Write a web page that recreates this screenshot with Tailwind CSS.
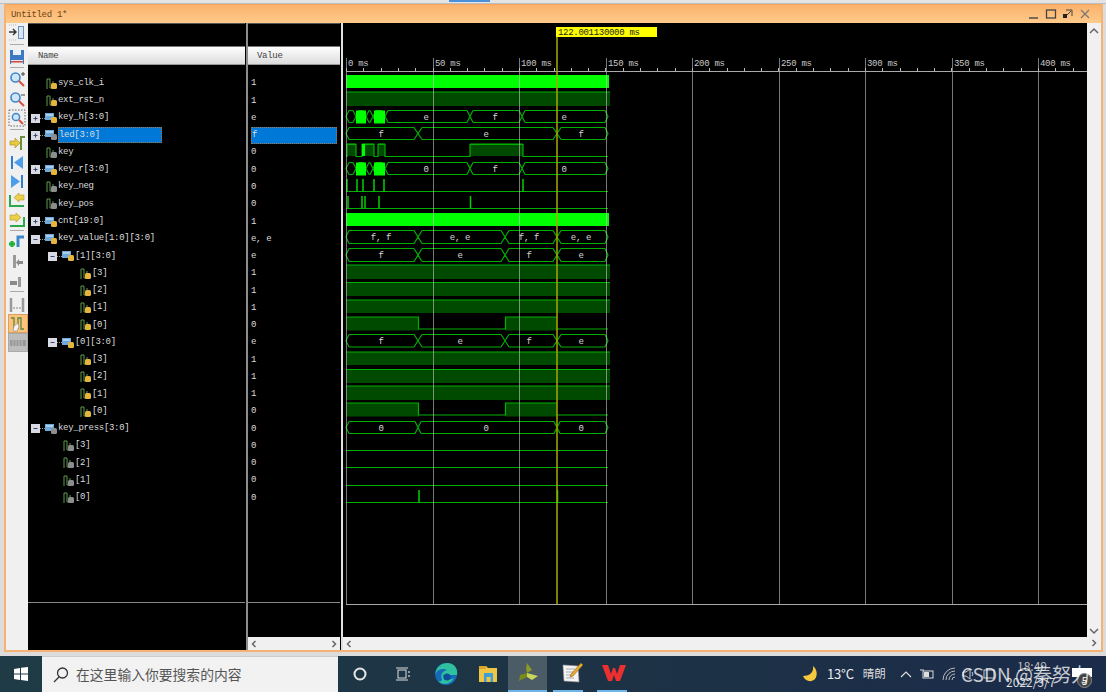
<!DOCTYPE html>
<html lang="en">
<head>
  <meta charset="UTF-8" />
  <title>Untitled 1*</title>
  <script src="https://cdn.jsdelivr.net/npm/@tailwindcss/browser@4"></script>
</head>
<body class="w-[1106px] h-[692px] overflow-hidden bg-[#dcdcdc] flex flex-col font-['Liberation_Mono',monospace]">

  <!-- top strip -->
  <div class="h-[4px] shrink-0 bg-[#e4e4e4] border-b border-[#bdbdbd]">
    <div class="ml-[449px] w-[41px] h-[2px] bg-[#4a90d9]"></div>
  </div>

  <!-- simulator window -->
  <div class="ml-[4px] w-[1099px] h-[648px] shrink-0 flex flex-col border-x-2 border-b-2 border-[#f6b273] bg-[#f0f0f0]">
    <div class="h-[19px] shrink-0 flex items-center justify-between pl-[5px] pr-[10px] bg-gradient-to-b from-[#fab26c] to-[#ffca8a] border-t border-[#f4a860]">
      <span class="pt-[4px] text-[9px] tracking-[-0.3px] text-[#6a4416]">Untitled 1*</span>
      <div class="flex items-center gap-[5px]">
        <svg width="12" height="12" viewBox="0 0 12 12"><path d="M1 10h9" stroke="#444" stroke-width="1.4"/></svg>
        <svg width="12" height="12" viewBox="0 0 12 12"><rect x="1.5" y="2" width="9" height="8" fill="none" stroke="#444" stroke-width="1.3"/></svg>
        <svg width="12" height="12" viewBox="0 0 12 12"><rect x="1" y="6" width="4" height="4" fill="#222"/><path d="M4 2h6v6M5 7l4-4" fill="none" stroke="#444"/></svg>
        <svg width="12" height="12" viewBox="0 0 12 12"><path d="M2 2l8 8M10 2l-8 8" stroke="#777" stroke-width="1.2"/></svg>
      </div>
    </div>

    <div class="flex-1 flex min-h-0">
      <!-- left toolbar -->
      <div class="w-[22px] shrink-0 flex flex-col items-center bg-[#f0f0f0]">
        <button class="h-[20px] w-full flex items-center justify-center"><svg width="18" height="18" viewBox="0 0 18 18"><path d="M1 8h7M5 5l3 3-3 3" fill="none" stroke="#333" stroke-width="1.4"/><rect x="10.5" y="2.5" width="5" height="12" fill="#d8e6f3" stroke="#6b93ba"/><path d="M1 1h8M1 16h8" stroke="#bbb" stroke-dasharray="1 1"/></svg></button>
        <div class="w-[14px] h-px bg-[#aaa] my-[1px]"></div>
        <button class="h-[20px] mt-[1px] w-full flex items-center justify-center"><svg width="18" height="18" viewBox="0 0 18 18"><rect x="2" y="2" width="14" height="14" fill="#3d78c2"/><rect x="5" y="2" width="8" height="5" fill="#e9f0f7"/><rect x="3" y="12" width="12" height="4" fill="#e8e8e8"/><rect x="3" y="13" width="12" height="1.5" fill="#d4483d"/></svg></button>
        <div class="w-[14px] h-px bg-[#aaa]"></div>
        <button class="h-[20px] mt-px w-full flex items-center justify-center"><svg width="18" height="18" viewBox="0 0 18 18"><circle cx="7.5" cy="7.5" r="4.5" fill="#cfe6f8" stroke="#3f87c9" stroke-width="1.6"/><path d="M11 11l5 5" stroke="#d9503c" stroke-width="2"/><path d="M13 4h4M15 2v4" stroke="#444"/></svg></button>
        <button class="h-[19px] w-full flex items-center justify-center"><svg width="18" height="18" viewBox="0 0 18 18"><circle cx="7.5" cy="7.5" r="4.5" fill="#cfe6f8" stroke="#3f87c9" stroke-width="1.6"/><path d="M11 11l5 5" stroke="#d9503c" stroke-width="2"/><path d="M13 5h4" stroke="#444"/></svg></button>
        <button class="h-[20px] w-full flex items-center justify-center"><svg width="18" height="18" viewBox="0 0 18 18"><rect x="1" y="1" width="16" height="16" fill="none" stroke="#666" stroke-dasharray="1.5 1.5"/><circle cx="8" cy="8" r="3.6" fill="#cfe6f8" stroke="#3f87c9" stroke-width="1.5"/><path d="M11 11l4 4" stroke="#d9503c" stroke-width="2"/></svg></button>
        <div class="w-[14px] h-px bg-[#aaa] my-[1px]"></div>
        <button class="h-[20px] mt-[2px] w-full flex items-center justify-center"><svg width="18" height="18" viewBox="0 0 18 18"><path d="M13 16V3h4" fill="none" stroke="#6d8f3c" stroke-width="2"/><path d="M2 7h5V4l5 5-5 5v-3H2z" fill="#e8c93c" stroke="#a58a20" stroke-width=".6"/></svg></button>
        <button class="h-[19px] w-full flex items-center justify-center"><svg width="18" height="18" viewBox="0 0 18 18"><rect x="3" y="2" width="2" height="13" fill="#2f7fd0"/><path d="M15 2v13L6 8.500z" fill="#4d9de8"/></svg></button>
        <button class="h-[19px] w-full flex items-center justify-center"><svg width="18" height="18" viewBox="0 0 18 18"><rect x="13" y="2" width="2" height="13" fill="#2f7fd0"/><path d="M3 2v13l9-6.500z" fill="#4d9de8"/></svg></button>
        <button class="h-[20px] w-full flex items-center justify-center"><svg width="18" height="18" viewBox="0 0 18 18"><path d="M2 3v11h14" fill="none" stroke="#2ea84a" stroke-width="2"/><path d="M16 3v5h-5v2L6 5.500 11 1v2z" fill="#ecd047" stroke="#a58a20" stroke-width=".5"/></svg></button>
        <button class="h-[19px] w-full flex items-center justify-center"><svg width="18" height="18" viewBox="0 0 18 18"><path d="M16 5v9H2" fill="none" stroke="#2ea84a" stroke-width="2"/><path d="M2 3h6V1l5 4.500L8 10V8H2z" fill="#ecd047" stroke="#a58a20" stroke-width=".5"/></svg></button>
        <div class="w-[14px] h-px bg-[#aaa]"></div>
        <button class="h-[19px] mt-px w-full flex items-center justify-center"><svg width="18" height="18" viewBox="0 0 18 18"><path d="M1 11h6M4 8v6" stroke="#22b33a" stroke-width="3"/><path d="M10 14V4h6" fill="none" stroke="#3f87c9" stroke-width="3"/></svg></button>
        <button class="h-[20px] w-full flex items-center justify-center"><svg width="18" height="18" viewBox="0 0 18 18"><path d="M5 16V3h3v13z" fill="#9a9a9a"/><path d="M15 9v3h-4v2l-3-3.500L11 7v2z" fill="#8a8a8a"/></svg></button>
        <button class="h-[19px] w-full flex items-center justify-center"><svg width="18" height="18" viewBox="0 0 18 18"><path d="M10 15V5h3v10z" fill="#9a9a9a"/><path d="M2 9h7v4H2z" fill="#8a8a8a"/></svg></button>
        <div class="w-[14px] h-px bg-[#aaa] mt-px"></div>
        <button class="h-[19px] mt-[3px] w-full flex items-center justify-center"><svg width="18" height="18" viewBox="0 0 18 18"><path d="M3 2v14M15 2v14" stroke="#999" stroke-width="2.500"/><path d="M5 12h8" stroke="#888" stroke-dasharray="2 1"/></svg></button>
        <button class="h-[19px] w-[20px] ml-px flex items-center justify-center bg-[#ffc27d] border border-[#d9a060]"><svg width="18" height="18" viewBox="0 0 18 18"><path d="M2 3h3v11M9 14V3h3v11h3" fill="none" stroke="#5c8a3c" stroke-width="1.300"/><path d="M4 16l1-5 4-3 1 4-2 4z" fill="#f4f4f4" stroke="#888" stroke-width=".6"/></svg></button>
        <button class="h-[19px] w-[20px] ml-px flex items-center justify-center bg-[#bdbdbd] border border-[#aaa]"><svg width="16" height="10" viewBox="0 0 16 10"><rect y="2" width="16" height="6" fill="#999"/><path d="M3 2v6M6 2v6M9 2v6M12 2v6" stroke="#bbb"/></svg></button>
      </div>

      <!-- name column -->
      <div class="w-[217px] shrink-0 flex flex-col bg-black">
        <div class="h-[23px] shrink-0 border-t border-[#555]"></div>
        <div class="h-[19px] shrink-0 flex items-center pl-[10px] bg-gradient-to-b from-white to-[#dcdcdc] border-t border-[#777] border-b border-b-[#999]">
          <span class="pt-[3px] text-[9px] tracking-[-0.3px] text-[#444]">Name</span>
        </div>
        <div id="names" class="h-[538px] shrink-0 pt-[10px] border-b border-[#888] text-[9px] tracking-[-0.3px] text-[#dcdcdc]"></div>
      </div>
      <div class="w-[3px] shrink-0 bg-[#8c8c8c] border-l border-black"></div>

      <!-- value column -->
      <div class="w-[92px] shrink-0 flex flex-col bg-black">
        <div class="h-[23px] shrink-0 border-t border-[#555]"></div>
        <div class="h-[19px] shrink-0 flex items-center pl-[9px] bg-gradient-to-b from-white to-[#dcdcdc] border-t border-[#777] border-b border-b-[#999]">
          <span class="pt-[3px] text-[9px] tracking-[-0.3px] text-[#444]">Value</span>
        </div>
        <div id="values" class="h-[538px] shrink-0 pt-[10.500px] border-b border-[#888] text-[9px] tracking-[-0.3px] text-[#dcdcdc]"></div>
        <div class="flex-1"></div>
        <div class="h-[13px] shrink-0 flex items-center justify-between px-[2px] bg-[#f0f0f0]">
          <svg width="8" height="8" viewBox="0 0 8 8"><path d="M5.500 1L2.500 4l3 3" fill="none" stroke="#666" stroke-width="1.500"/></svg>
          <svg width="8" height="8" viewBox="0 0 8 8"><path d="M2.500 1l3 3-3 3" fill="none" stroke="#666" stroke-width="1.500"/></svg>
        </div>
      </div>
      <div class="w-[3px] shrink-0 bg-black border-r-2 border-[#e0e0e0]"></div>

      <!-- waveform -->
      <div class="w-[744px] shrink-0 flex flex-col bg-black">
        <svg id="wave" width="744" height="614" viewBox="343 23 744 614" class="block shrink-0 text-[9px] tracking-[-0.3px]"></svg>
        <div class="h-[13px] shrink-0 flex items-center px-[2px] bg-[#f0f0f0]">
          <svg width="8" height="8" viewBox="0 0 8 8"><path d="M5.500 1L2.500 4l3 3" fill="none" stroke="#666" stroke-width="1.500"/></svg>
        </div>
      </div>

      <!-- vertical scrollbar -->
      <div class="w-[14px] shrink-0 flex flex-col items-center justify-between py-[3px] bg-[#f0f0f0]">
        <svg class="mt-[1px]" width="10" height="8" viewBox="0 0 10 8"><path d="M1 6l4-4 4 4" fill="none" stroke="#666" stroke-width="1.500"/></svg>
        <div class="flex flex-col items-center gap-[4px]">
          <svg width="10" height="8" viewBox="0 0 10 8"><path d="M1 2l4 4 4-4" fill="none" stroke="#666" stroke-width="1.500"/></svg>
          <svg width="8" height="8" viewBox="0 0 8 8"><path d="M2.500 1l3 3-3 3" fill="none" stroke="#666" stroke-width="1.500"/></svg>
        </div>
      </div>
    </div>
  </div>

  <!-- windows taskbar -->
  <div class="relative mt-[4px] h-[36px] shrink-0 flex items-center bg-gradient-to-r from-[#1e3b46] via-[#1d3344] to-[#1b2b4a] font-['Noto_Sans_CJK_SC',sans-serif] text-white">
    <div class="w-[42px] flex justify-center">
      <svg width="14" height="14" viewBox="0 0 14 14" fill="#fff"><path d="M0 2l6-1v5.500H0zM7 .8L14 0v6.500H7zM0 7.500h6V13l-6-1zM7 7.500h7V14l-7-1z"/></svg>
    </div>
    <div class="w-[296px] h-full flex items-center bg-[#f2f2f2] border-t border-[#ccc]">
      <svg class="ml-[10px]" width="18" height="18" viewBox="0 0 18 18"><circle cx="10.500" cy="7" r="5" fill="none" stroke="#333" stroke-width="1.300"/><path d="M7 11l-5 5" stroke="#333" stroke-width="1.300"/></svg>
      <span class="ml-[6px] text-[13.800px] text-[#555]">在这里输入你要搜索的内容</span>
    </div>
    <div class="w-[44px] flex justify-center">
      <svg width="16" height="16" viewBox="0 0 16 16"><circle cx="8" cy="8" r="5.500" fill="none" stroke="#e8e8e8" stroke-width="2"/></svg>
    </div>
    <div class="w-[41px] flex justify-center">
      <svg width="16" height="16" viewBox="0 0 16 16" fill="none" stroke="#ddd"><rect x="3" y="4" width="8" height="8"/><path d="M1 2h12M1 14h12M14 5v2M14 9v2" stroke-width="1.200"/></svg>
    </div>
    <div class="w-[42px] ml-[2px] flex justify-center">
      <svg width="24" height="24" viewBox="0 0 24 24"><circle cx="12" cy="12" r="11" fill="#1668b8"/><path d="M1.500 11C3 3 11 -1 18 2c4 2 6 6 5 11H9c0 4 6 6 11 3-3 6-11 8-16 3 2 1 4 0 4-2-2-3 0-8 5-9-4-2-9-1-11 3z" fill="#2fc0a0"/><circle cx="13" cy="15" r="3.500" fill="#0c4f96"/></svg>
    </div>
    <div class="w-[41px] flex justify-center">
      <svg width="20" height="18" viewBox="0 0 20 18"><path d="M1 1h7l2 2h9v14H1z" fill="#f1c544"/><rect x="1" y="1" width="7" height="3" fill="#d9a428"/><rect x="6" y="8" width="9" height="9" fill="#3e9fd8"/><rect x="8.500" y="12" width="4" height="5" fill="#f1c544"/></svg>
    </div>
    <div class="w-[39px] h-full flex justify-center items-center bg-[#4b5c66] border-b-2 border-[#6eb4e8]">
      <svg width="22" height="22" viewBox="0 0 22 22"><path d="M10 1l5 7-5 3-1-4z" fill="#8a9a24"/><path d="M10 11l11 3-6 4-5-3z" fill="#c9d65c"/><path d="M10 11l-7 2-1 6 8-4z" fill="#7a8a1c"/></svg>
    </div>
    <div class="w-[30px] h-full ml-[6px] flex justify-center items-center border-b-2 border-[#6eb4e8]">
      <svg class="ml-[8px] shrink-0" width="24" height="24" viewBox="0 0 24 24"><path d="M3 4l15 1 1 16-15-1z" fill="#f4f4f4" stroke="#999" stroke-width=".6"/><path d="M6 8h9M6 11h9M6 14h7M6 17h8" stroke="#aaa"/><path d="M21 2l2 2-10 11-3 1 1-3z" fill="#e9a82f" stroke="#7a5a10" stroke-width=".5"/></svg>
    </div>
    <div class="w-[30px] h-full ml-[14px] flex justify-center items-center border-b-2 border-[#6eb4e8]">
      <svg class="ml-[4px] shrink-0" width="26" height="20" viewBox="0 0 26 20"><path d="M1 2h6l3 9 2-6h2l2 6 3-9h6l-6 16h-4l-2-6-2 6H7z" fill="#ec2f2f"/></svg>
    </div>

    <!-- system tray -->
    <svg class="ml-[174px]" width="18" height="18" viewBox="0 0 18 18"><path d="M12 1c1 6-3 10-10 10 2 5 8 7 12 3 3-4 2-10-2-13z" fill="#f6c83b"/></svg>
    <span class="ml-[8px] text-[13px] tracking-[-0.2px] text-[#eee]">13°C</span>
    <span class="ml-[9px] text-[11.500px] text-[#ddd]">晴朗</span>
    <svg class="ml-[14px]" width="12" height="8" viewBox="0 0 12 8"><path d="M1 7l5-5 5 5" fill="none" stroke="#ddd" stroke-width="1.200"/></svg>
    <svg class="ml-[8px]" width="14" height="10" viewBox="0 0 14 10"><rect x="3" y="2" width="10" height="7" fill="none" stroke="#ddd"/><rect x="4" y="3" width="5" height="5" fill="#ddd"/><path d="M0 1h4" stroke="#ddd"/></svg>
    <svg class="ml-[8px]" width="14" height="14" viewBox="0 0 14 14" fill="none" stroke="#bbb"><path d="M1 13a12 12 0 0 1 12-12M4 13a9 9 0 0 1 9-9M7 13a6 6 0 0 1 6-6M10 13a3 3 0 0 1 3-3"/></svg>
    <svg class="ml-[6px]" width="14" height="14" viewBox="0 0 14 14" fill="none" stroke="#ccc"><path d="M1 5h3l4-3v10l-4-3H1zM10 5a3 3 0 0 1 0 4"/></svg>
    <svg class="ml-[6px]" width="14" height="14" viewBox="0 0 14 14" fill="none" stroke="#ccc"><rect x="2" y="3" width="10" height="8"/></svg>
    <span class="absolute left-[1017px] top-[1px] text-[12px] text-[#bbb]">18:49</span>
    <span class="absolute left-[1006px] top-[18px] text-[12px] leading-[16px] text-[#ddd]">2022/3/7</span>
    <span class="absolute left-[1072px] top-[12px] w-[20px] h-[9px] bg-white"></span>
    <span class="absolute left-[1077px] top-[17px] w-[15px] h-[15px] rounded-full bg-[#444] border border-[#888] flex items-center justify-center text-[10px] leading-none">5</span>
    <span class="absolute left-[961px] top-[5px] text-[19px] leading-[26px] text-white/75 whitespace-nowrap">CSDN @秦努力</span>
  </div>

  <script>
    const rows = [
      { name: "sys_clk_i", value: "1", pad: 3, icon: "bit", on: true },
      { name: "ext_rst_n", value: "1", pad: 3, icon: "bit", on: true },
      { name: "key_h[3:0]", value: "e", pad: 3, icon: "bus", on: true, box: "+" },
      { name: "led[3:0]", value: "f", pad: 3, icon: "bus", box: "+", selected: true },
      { name: "key", value: "0", pad: 3, icon: "bit" },
      { name: "key_r[3:0]", value: "0", pad: 3, icon: "bus", on: true, box: "+" },
      { name: "key_neg", value: "0", pad: 3, icon: "bit" },
      { name: "key_pos", value: "0", pad: 3, icon: "bit" },
      { name: "cnt[19:0]", value: "1", pad: 3, icon: "bus", on: true, box: "+" },
      { name: "key_value[1:0][3:0]", value: "e, e", pad: 3, icon: "bus", on: true, box: "-" },
      { name: "[1][3:0]", value: "e", pad: 20, icon: "bus", on: true, box: "-" },
      { name: "[3]", value: "1", pad: 37, icon: "bit", on: true },
      { name: "[2]", value: "1", pad: 37, icon: "bit", on: true },
      { name: "[1]", value: "1", pad: 37, icon: "bit", on: true },
      { name: "[0]", value: "0", pad: 37, icon: "bit", on: true },
      { name: "[0][3:0]", value: "e", pad: 20, icon: "bus", on: true, box: "-" },
      { name: "[3]", value: "1", pad: 37, icon: "bit", on: true },
      { name: "[2]", value: "1", pad: 37, icon: "bit", on: true },
      { name: "[1]", value: "1", pad: 37, icon: "bit", on: true },
      { name: "[0]", value: "0", pad: 37, icon: "bit", on: true },
      { name: "key_press[3:0]", value: "0", pad: 3, icon: "bus", box: "-" },
      { name: "[3]", value: "0", pad: 20, icon: "bit" },
      { name: "[2]", value: "0", pad: 20, icon: "bit" },
      { name: "[1]", value: "0", pad: 20, icon: "bit" },
      { name: "[0]", value: "0", pad: 20, icon: "bit" },
    ];

    function signalIcon(row) {
      const dot = row.on ? "#e6b53c" : "#8d8d8d";
      const body = row.icon === "bus"
        ? `<rect x="0" y="1" width="9" height="7" fill="#6ea9dc"/><path d="M1 3h7" stroke="#e6f2fb"/>`
        : `<path d="M2 11V1h3v9h3V3" fill="none" stroke="#5f9a4c"/>`;
      return `<svg width="12" height="12" viewBox="0 0 12 12" class="shrink-0">${body}<rect x="6" y="5" width="6" height="6" rx="1.500" fill="${dot}"/></svg>`;
    }

    function treeBox(row) {
      if (!row.box) return `<span class="w-[14px] shrink-0"></span>`;
      const bar = row.box === "+" ? `<path d="M4.500 2.500v4M2.500 4.500h4" stroke="#446"/>` : `<path d="M2.500 4.500h4" stroke="#446"/>`;
      return `<svg width="9" height="9" viewBox="0 0 9 9" class="shrink-0"><rect width="9" height="9" fill="#d8dae4"/>${bar}</svg><span class="w-[5px] shrink-0 border-t border-dotted border-[#999]"></span>`;
    }

    document.getElementById("names").innerHTML = rows.map(row => {
      const label = row.selected
        ? `<span class="ml-px w-[104px] h-[16px] flex items-center bg-[#0078d7] border border-dotted border-[#a8763c]">${row.name}</span>`
        : `<span class="ml-px">${row.name}</span>`;
      return `<div class="h-[17.270px] flex items-center" style="padding-left:${row.pad}px">${treeBox(row)}${signalIcon(row)}${label}</div>`;
    }).join("");

    document.getElementById("values").innerHTML = rows.map(row => {
      const label = row.selected
        ? `<span class="ml-[3px] w-[86px] h-[17px] flex items-center bg-[#0078d7] border border-dotted border-[#a8763c]">${row.value}</span>`
        : `<span class="ml-[3px]">${row.value}</span>`;
      return `<div class="h-[17.270px] flex items-center">${label}</div>`;
    }).join("");

    // waveform, drawn in page coordinates
    const GREEN = "#00b000", BRIGHT = "#00ff00", DARK = "#004a00";
    let svg = "";

    const label = (x, y, text, fill = "#d8d8d8", anchor = "middle") =>
      `<text x="${x}" y="${y}" fill="${fill}" text-anchor="${anchor}">${text}</text>`;

    const solid = (x1, x2, top, bot) => `<rect x="${x1}" y="${top}" width="${x2 - x1}" height="${bot - top}" fill="${BRIGHT}"/>`;

    const dark = (x1, x2, top, bot) =>
      `<rect x="${x1}" y="${top}" width="${x2 - x1}" height="${bot - top}" fill="${DARK}"/>` +
      `<path d="M${x1} ${top}H${x2}" stroke="${GREEN}" stroke-width="1.200"/>`;

    // bus value: two rails, end tips and an X at every value change
    function bus(top, bot, stops, labels, cross = 4) {
      const mid = (top + bot) / 2;
      const first = stops[0], last = stops[stops.length - 1];
      let d = `M${first + 3} ${top}L${first} ${mid}L${first + 3} ${bot}M${last - 3} ${top}L${last} ${mid}L${last - 3} ${bot}`;
      for (let i = 0; i < stops.length - 1; i++) {
        const l = i === 0 ? first + 3 : stops[i] + cross;
        const r = i === stops.length - 2 ? last - 3 : stops[i + 1] - cross;
        d += `M${l} ${top}H${r}M${l} ${bot}H${r}`;
      }
      stops.slice(1, -1).forEach(c => {
        d += `M${c - cross} ${top}L${c + cross} ${bot}M${c - cross} ${bot}L${c + cross} ${top}`;
      });
      let out = `<path d="${d}" fill="none" stroke="${GREEN}" stroke-width="1.200"/>`;
      labels.forEach(([x, text]) => { out += label(x, mid + 3, text); });
      return out;
    }

    const pulses = (base, top, xs) =>
      `<path d="M346 ${base}H608" stroke="${GREEN}" stroke-width="1.200"/>` +
      xs.map(x => `<path d="M${x} ${base}V${top}" stroke="#00d000" stroke-width="1.500"/>`).join("");

    // key_h and key_r toggle the same way at the start
    const toggling = (top, bot, labels) =>
      bus(top, bot, [346, 356, 366, 373, 385, 470, 522, 608], [], 3) +
      solid(356, 366, top, bot + 1) + solid(374, 385, top, bot + 1) +
      labels.map(([x, t]) => label(x, (top + bot) / 2 + 3, t)).join("");

    svg += solid(346, 609, 75, 88);
    svg += dark(346, 610, 92, 106);
    svg += toggling(110.5, 122.5, [[426, "e"], [495, "f"], [564, "e"]]);
    svg += bus(127.5, 139.5, [346, 418, 557, 608], [[381, "f"], [486, "e"], [581, "f"]]);

    // key
    svg += dark(347, 356, 144, 156) + dark(362, 374, 144, 156) + dark(378, 385, 144, 156) + dark(470, 523, 144, 156);
    svg += `<path d="M346 156.500H347V144.500H356V156.500H362V144.500H374V156.500H378V144.500H385V156.500H470V144.500H523V156.500H608" fill="none" stroke="${GREEN}" stroke-width="1.200"/>`;
    svg += solid(362, 365, 144, 156);

    svg += toggling(162.5, 174.5, [[426, "0"], [495, "f"], [564, "0"]]);
    svg += pulses(191.500, 179, [347, 357, 363, 374, 384, 523]);
    svg += pulses(208.500, 196, [348, 362, 365, 379, 470.500]);
    svg += solid(346, 609, 213, 226);
    svg += bus(230.5, 243.5, [346, 418, 505, 557, 608], [[381, "f, f"], [460, "e, e"], [529, "f, f"], [581, "e, e"]]);
    svg += bus(248.5, 261.5, [346, 418, 505, 557, 608], [[381, "f"], [460, "e"], [529, "f"], [581, "e"]]);
    svg += dark(346, 610, 265, 279) + dark(346, 610, 282.500, 296) + dark(346, 610, 300, 313);

    const steps = (top, bot) =>
      dark(346, 419, top, bot) + dark(505, 557, top, bot) +
      `<path d="M418.500 ${top}V${bot - 1.500}H505.500V${top}M557 ${bot - 1.500}H608" fill="none" stroke="${GREEN}" stroke-width="1.200"/>`;

    svg += steps(317, 330.500);
    svg += bus(334.5, 347, [346, 418, 505, 557, 608], [[381, "f"], [460, "e"], [529, "f"], [581, "e"]]);
    svg += dark(346, 610, 352, 365) + dark(346, 610, 369.500, 383) + dark(346, 610, 386, 400);
    svg += steps(403, 416.500);
    svg += bus(421.5, 433.5, [346, 418, 557, 608], [[381, "0"], [486, "0"], [581, "0"]], 3);
    svg += pulses(450.500, 450, []);
    svg += pulses(467.500, 467, []);
    svg += pulses(485.500, 485, []);
    svg += pulses(502.500, 490, [419, 557.500]);

    // time ruler and grid
    ["0", "50", "100", "150", "200", "250", "300", "350", "400"].forEach((t, i) => {
      const x = Math.round(346 + 86.5 * i) + 0.5;
      svg += `<path d="M${x} 58V604" stroke="#c8c8c8" stroke-opacity=".6"/>`;
      svg += label(x + 1.5, 66, `${t} ms`, "#c8c8c8", "start");
    });
    for (let x = 346; x < 1087; x += 17.3) {
      svg += `<path d="M${Math.round(x) + 0.5} 68V71" stroke="#bbb"/>`;
    }
    svg += `<path d="M346 71.500H1087M346 604.500H1087" stroke="#aaa"/>`;

    // cursor
    svg += `<path d="M557 37V604" stroke="#a8a800" stroke-width="1.500"/>`;
    svg += `<rect x="556" y="27" width="101" height="10" fill="#ffff00"/>`;
    svg += label(558, 35, "122.001130000 ms", "#222", "start");

    document.getElementById("wave").innerHTML = svg;
  </script>
</body>
</html>
